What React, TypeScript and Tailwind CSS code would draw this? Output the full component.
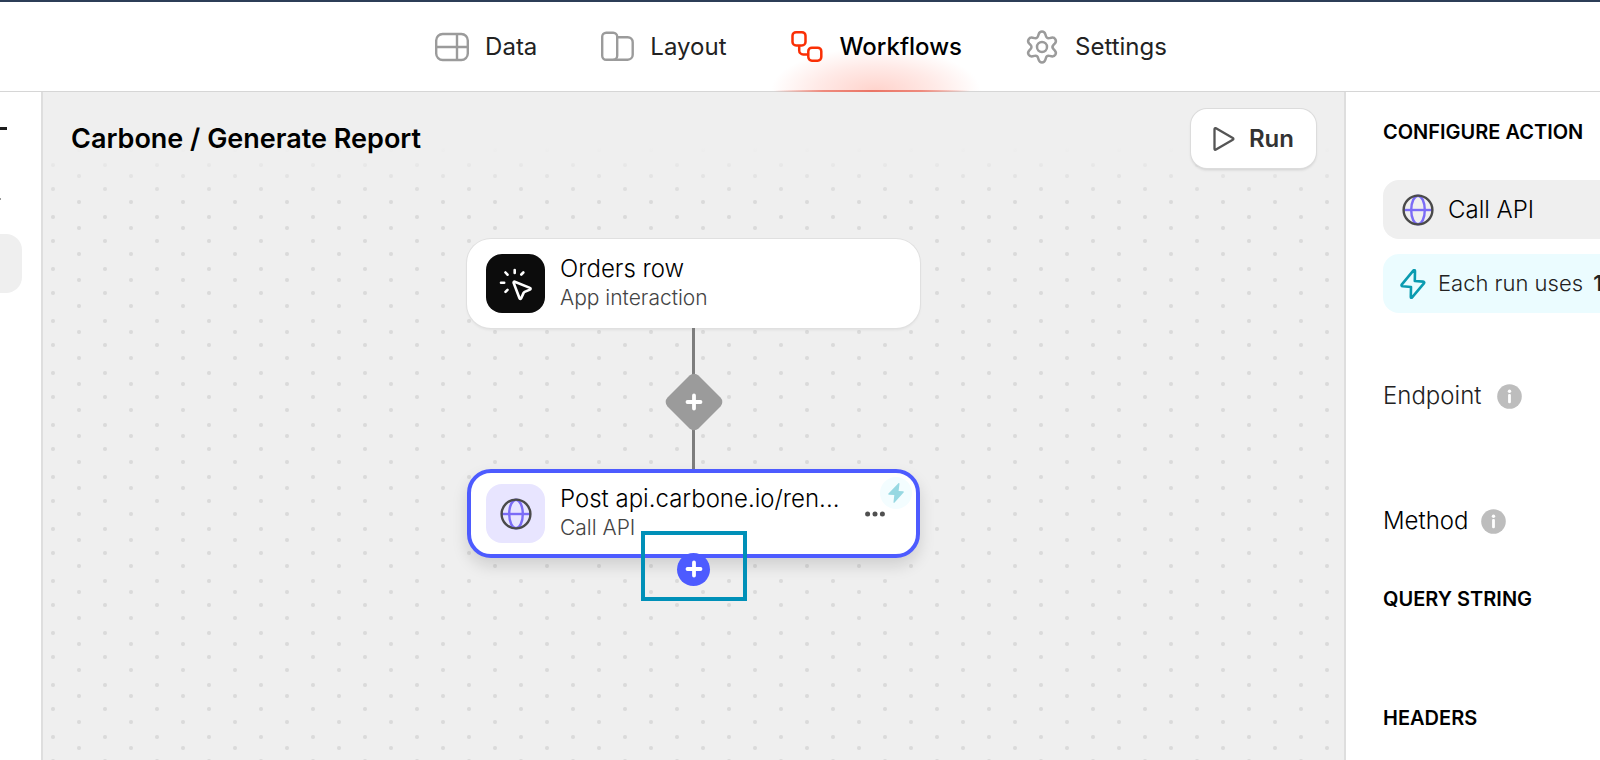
import type { ReactNode } from "react";

function DataIcon() {
  return (
    <svg viewBox="0 0 34 34" className="size-[34px]" fill="none" stroke="#9b9b9b" strokeWidth="2.400" aria-hidden="true">
      <rect x="1.200" y="4" width="31.600" height="26" rx="6.500" />
      <path d="M1 17h32M22 4v26" />
    </svg>
  );
}

function LayoutIcon() {
  return (
    <svg viewBox="0 0 34 34" className="size-[34px]" fill="none" stroke="#9b9b9b" strokeWidth="2.400" aria-hidden="true">
      <rect x="2.200" y="2.700" width="15" height="27" rx="4" />
      <path d="M17.200 7.200h10.500a5 5 0 0 1 5 5v12.500a5 5 0 0 1-5 5H13.500" />
    </svg>
  );
}

function WorkflowIcon() {
  return (
    <svg viewBox="0 0 34 34" className="size-[34px]" fill="none" stroke="#fa2f05" strokeWidth="2.500" aria-hidden="true">
      <rect x="2.500" y="2.200" width="13" height="13.300" rx="3.600" />
      <rect x="18.300" y="17.700" width="13" height="13" rx="3.600" />
      <path d="M9.200 15.500v4.900a4 4 0 0 0 4 4h5.100" />
    </svg>
  );
}

function GearIcon() {
  return (
    <svg viewBox="0 0 34 34" className="size-[34px]" fill="none" stroke="#9b9b9b" strokeWidth="2.500" strokeLinejoin="round" aria-hidden="true">
      <circle cx="17" cy="17" r="5" />
      <path d="M13.600 4.300C14.200 2.400 15.200 1.500 17 1.500s2.800.9 3.400 2.800l.5 1.700c.5 1.700 1.800 2.500 3.600 2.100l1.800-.4c2-.4 3.200.1 4.100 1.600.9 1.600.7 2.900-.7 4.400l-1.200 1.200c-1.300 1.300-1.300 2.900 0 4.200l1.200 1.200c1.400 1.500 1.600 2.800.7 4.400-.9 1.500-2.100 2-4.100 1.600l-1.800-.4c-1.800-.4-3.100.4-3.600 2.100l-.5 1.700c-.6 1.900-1.600 2.800-3.400 2.800s-2.800-.9-3.400-2.800l-.5-1.700c-.5-1.700-1.800-2.500-3.600-2.100l-1.800.4c-2 .4-3.200-.1-4.100-1.600-.9-1.600-.7-2.900.7-4.400l1.200-1.200c1.300-1.300 1.300-2.900 0-4.200l-1.200-1.200c-1.400-1.500-1.600-2.800-.7-4.400.9-1.500 2.100-2 4.100-1.600l1.800.4c1.800.4 3.100-.4 3.600-2.100z" />
    </svg>
  );
}

function GlobeIcon() {
  return (
    <svg viewBox="0 0 32 32" className="size-8 shrink-0" fill="none" strokeWidth="2.400" aria-hidden="true">
      <g stroke="#7b6cf6">
        <ellipse cx="16" cy="16" rx="6.800" ry="14.300" />
        <path d="M2 16h28" />
      </g>
      <circle cx="16" cy="16" r="14.400" stroke="#4a4a4a" />
    </svg>
  );
}

function ClickIcon() {
  return (
    <svg viewBox="0 0 34 34" className="size-[34px]" fill="none" stroke="#fff" strokeWidth="2.600" strokeLinecap="round" strokeLinejoin="round" aria-hidden="true">
      <path d="M14.600 15.800a.9.900 0 0 1 1.100-1.100l15.300 6.200a.9.900 0 0 1 0 1.700l-5.400 2.300a2 2 0 0 0-1 1l-2.400 5.400a.9.900 0 0 1-1.700-.1z" />
      <path d="M15.700 3v3M24.300 5.500l-2 2M6.500 5.500l2 2.200M2 15.700h3.200M8.500 22.800l-2 2" />
    </svg>
  );
}

function BoltOutline() {
  return (
    <svg viewBox="0 0 26 30" className="h-[30px] w-[26px] shrink-0" fill="none" stroke="#0b9bb0" strokeWidth="2.600" strokeLinejoin="round" aria-hidden="true">
      <path d="M13.300 1.600 1.900 15.400c-.7.900-.3 1.800.8 1.900l8.300.7-.2 10c0 1 .6 1.200 1.300.4l11.800-14c.7-.9.300-1.700-.8-1.800l-8.300-.6.200-10c0-1-.9-1.200-1.700-.4z" />
    </svg>
  );
}

function BoltSolid() {
  return (
    <svg viewBox="0 0 16 20" className="h-5 w-4" fill="#97d8e2" aria-hidden="true">
      <path d="M10.400.3c.5-.5 1.100-.2 1.100.5L10.600 8l4.500.3c.7.100 1 .6.500 1.200l-9 10.100c-.5.600-1.200.4-1.100-.5l.8-7.100-5.300-.3c-.8-.1-1-.7-.5-1.200z" />
    </svg>
  );
}

function PlusIcon() {
  return (
    <svg viewBox="0 0 18 18" className="size-[18px]" stroke="#fff" strokeWidth="3.800" strokeLinecap="round" aria-hidden="true">
      <path d="M9 2.500v13M2.500 9h13" />
    </svg>
  );
}

function InfoButton({ label }: { label: string }) {
  return (
    <button type="button" aria-label={label} className="shrink-0">
      <svg viewBox="0 0 25 25" className="size-[25px]" aria-hidden="true">
        <circle cx="12.500" cy="12.500" r="12.300" fill="#bdbdbd" />
        <circle cx="12.500" cy="7.200" r="1.700" fill="#fff" />
        <rect x="11.100" y="9.900" width="2.800" height="9.400" rx="1.200" fill="#fff" />
      </svg>
    </button>
  );
}

function NavItem({ icon, label, active = false }: { icon: ReactNode; label: string; active?: boolean }) {
  return (
    <a
      href="#"
      aria-current={active ? "page" : undefined}
      className={
        active
          ? "relative flex items-center gap-4 font-medium text-black"
          : "relative flex items-center gap-4 font-normal text-[#222]"
      }
    >
      {active && (
        <>
          <span className="absolute -right-5 bottom-0 -left-5 h-11 bg-[radial-gradient(ellipse_at_bottom,#ffd3cc_0%,#ffeae7_40%,transparent_70%)]" />
          <span className="absolute -right-2 -bottom-px -left-4 h-0.5 bg-[linear-gradient(to_right,transparent,#ee8a7d_25%,#ea7566_50%,#ee8a7d_75%,transparent)]" />
        </>
      )}
      <span className="relative">{icon}</span>
      <span className="relative">{label}</span>
    </a>
  );
}

function NodeText({ title, subtitle }: { title: string; subtitle: string }) {
  return (
    <div className="min-w-0 flex-1 pb-0.5 font-light">
      <h2 className="truncate text-2xl leading-[30px] text-black">{title}</h2>
      <p className="text-[21px] leading-7 text-[#444]">{subtitle}</p>
    </div>
  );
}

export default function App() {
  return (
    <div className="flex min-h-screen flex-col overflow-hidden bg-white font-['Inter',sans-serif] text-black">
      <header className="border-t-2 border-b border-t-[#2c3e57] border-b-[#d6d6d6]">
        <nav className="flex h-[89px] items-stretch justify-center gap-[63px] pl-0.5 text-2xl">
          <NavItem icon={<DataIcon />} label="Data" />
          <NavItem icon={<LayoutIcon />} label="Layout" />
          <NavItem icon={<WorkflowIcon />} label="Workflows" active />
          <NavItem icon={<GearIcon />} label="Settings" />
        </nav>
      </header>

      <div className="flex flex-1">
        <aside className="flex w-[41px] shrink-0 flex-col">
          <div className="mt-[35px] h-[3px] w-[7px] bg-[#1c1c1c]" />
          <div className="mt-[68px] h-0.5 w-px bg-[#999]" />
          <div className="mt-[34px] h-[59px] w-[22px] rounded-r-2xl bg-[#efefef]" />
        </aside>

        <main className="min-w-0 flex-1 border-x-2 border-[#dedede] bg-[#efefef] bg-[linear-gradient(#efefef_54px,transparent_108px),radial-gradient(circle_at_10px_45px,#dadada_1.5px,transparent_2.5px),radial-gradient(circle_at_10px_21px,#dadada_1.5px,transparent_2.5px),radial-gradient(circle_at_36px_6px,#dadada_1.5px,transparent_2.5px)] bg-[length:100%_100%,52px_52px,52px_52px,52px_26px]">
          <div className="flex items-center justify-between px-7 pt-[17px]">
            <h1 className="text-[27px] leading-9 font-semibold">Carbone / Generate Report</h1>
            <button
              type="button"
              className="flex h-[59px] items-center gap-[14px] rounded-2xl bg-white px-[22px] text-2xl font-semibold text-[#333] shadow-[0_0_0_1px_#dcdcdc,0_2px_3px_#0002]"
            >
              <svg viewBox="0 0 22 24" className="h-6 w-[22px]" fill="none" stroke="#555" strokeWidth="2.300" strokeLinejoin="round" aria-hidden="true">
                <path d="M1.500 2.200c0-.9.700-1.300 1.500-.9l16.800 9.800c.8.500.8 1.300 0 1.700L3 22.600c-.8.500-1.500.1-1.500-.9z" />
              </svg>
              Run
            </button>
          </div>

          <div className="mt-[71px] flex flex-col items-center">
            <article className="flex h-[89px] w-[453px] items-center gap-[15px] rounded-3xl bg-white px-[19px] shadow-[0_0_0_1px_#e0e0e0,0_2px_3px_#0001]">
              <div className="flex size-[59px] shrink-0 items-center justify-center rounded-2xl bg-[#0c0c0c]">
                <ClickIcon />
              </div>
              <NodeText title="Orders row" subtitle="App interaction" />
            </article>

            <div className="h-[49px] w-[3px] bg-[#7d7d7d]" />
            <button type="button" aria-label="Add step between" className="relative flex size-[50px] items-center justify-center">
              <svg viewBox="0 0 58 58" className="absolute -inset-1 size-[58px]" fill="#9b9b9b" aria-hidden="true">
                <path d="M24.500 2.500a6.500 6.500 0 0 1 9 0l22 22a6.500 6.500 0 0 1 0 9l-22 22a6.500 6.500 0 0 1-9 0l-22-22a6.500 6.500 0 0 1 0-9z" />
              </svg>
              <span className="relative">
                <PlusIcon />
              </span>
            </button>
            <div className="h-[42px] w-[3px] bg-[#7d7d7d]" />

            <article className="relative flex h-[89px] w-[453px] items-center gap-[15px] rounded-3xl border-4 border-[#4d5bff] bg-white px-[15px] shadow-[0_8px_16px_#0002]">
              <div className="flex size-[59px] shrink-0 items-center justify-center rounded-2xl bg-[#e8e5ff]">
                <GlobeIcon />
              </div>
              <NodeText title="Post api.carbone.io/ren..." subtitle="Call API" />
              <button type="button" aria-label="More options" className="mr-4 shrink-0">
                <svg viewBox="0 0 20 6" className="h-1.5 w-5" fill="#505050" aria-hidden="true">
                  <circle cx="2.600" cy="3" r="2.500" />
                  <circle cx="10" cy="3" r="2.500" />
                  <circle cx="17.400" cy="3" r="2.500" />
                </svg>
              </button>
              <span className="absolute top-1 right-1 flex size-8 items-center justify-center rounded-full bg-[#f3fdff]">
                <BoltSolid />
              </span>
              <div className="absolute top-[58px] left-1/2 flex h-[70px] w-[106px] -translate-x-1/2 items-center justify-center border-4 border-[#0090b8] pt-1.5">
                <button
                  type="button"
                  aria-label="Add step"
                  className="flex size-[33px] items-center justify-center rounded-full bg-[#4d5bff]"
                >
                  <PlusIcon />
                </button>
              </div>
            </article>
          </div>
        </main>

        <aside className="flex w-[254px] shrink-0 flex-col overflow-hidden pl-[37px] whitespace-nowrap">
          <h2 className="mt-[26px] text-xl leading-7 font-semibold">CONFIGURE ACTION</h2>
          <div className="mt-[34px] flex h-[59px] items-center gap-[14px] rounded-l-2xl bg-[#efefef] pl-[19px] text-2xl font-light">
            <GlobeIcon />
            Call API
          </div>
          <div className="mt-[15px] flex h-[59px] items-center gap-3 rounded-l-2xl bg-[#ebfcff] pl-[17px] text-[22px] font-light text-[#222]">
            <BoltOutline />
            <span>
              Each run uses <b className="pl-1 font-semibold">1</b>
            </span>
          </div>
          <div className="mt-[68px] flex h-[30px] items-center gap-4 text-2xl font-light text-[#222]">
            Endpoint
            <InfoButton label="About the endpoint" />
          </div>
          <div className="mt-[95px] flex h-[30px] items-center gap-3 text-2xl font-light">
            Method
            <InfoButton label="About the method" />
          </div>
          <h2 className="mt-[49px] text-xl leading-7 font-semibold">QUERY STRING</h2>
          <h2 className="mt-[91px] text-xl leading-7 font-semibold">HEADERS</h2>
        </aside>
      </div>
    </div>
  );
}
